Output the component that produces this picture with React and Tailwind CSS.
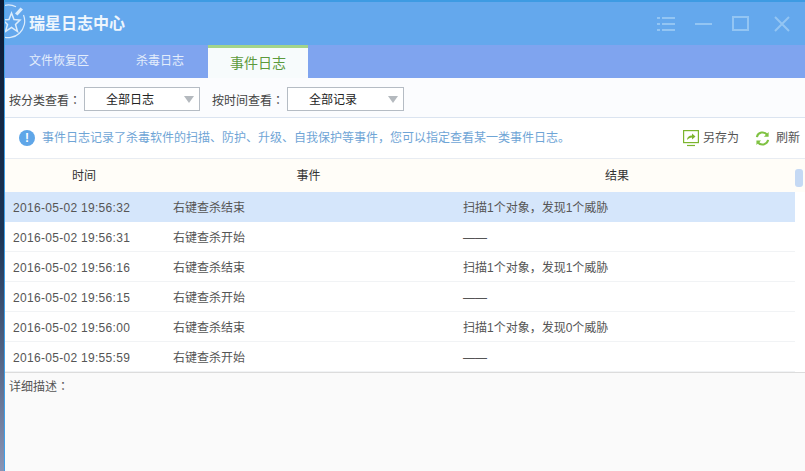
import React from 'react';

const rows = [
  ['2016-05-02 19:56:32', '右键查杀结束', '扫描1个对象，发现1个威胁', true],
  ['2016-05-02 19:56:31', '右键查杀开始', '——'],
  ['2016-05-02 19:56:16', '右键查杀结束', '扫描1个对象，发现1个威胁'],
  ['2016-05-02 19:56:15', '右键查杀开始', '——'],
  ['2016-05-02 19:56:00', '右键查杀结束', '扫描1个对象，发现0个威胁'],
  ['2016-05-02 19:55:59', '右键查杀开始', '——'],
];

function Logo() {
  return (
    <svg width="22" height="43" viewBox="0 0 22 43" fill="none" stroke="#dcecfb" strokeWidth="1.2" className="shrink-0">
      <path d="M-4 4.800 A16.500 16.500 0 0 1 11 4.800" />
      <path d="M18.500 13 A16.500 16.500 0 0 1 -4 34" />
      <path d="M6.500 11 L9 17.500 L15 18 L10.500 22.500 L12.500 29.500 L6.500 25.500 L0.500 29.500 L2.500 22.500 L-2 18 L4 17.500 Z" strokeWidth="1.5" />
      <path d="M10 11.500 L15.500 5.500 L18 7.500 L12.500 13.500 Z" fill="#dcecfb" stroke="none" />
    </svg>
  );
}

function WindowButtons() {
  return (
    <div className="flex items-center ml-auto">
      <svg width="18" height="16" viewBox="0 0 18 16" stroke="#93c5f3" strokeWidth="2" className="mr-[20px]">
        <path d="M0 2h3M5 2h13M0 8h3M5 8h13M0 14h3M5 14h13" />
      </svg>
      <svg width="17" height="17" viewBox="0 0 17 17" stroke="#93c5f3" strokeWidth="2" className="mr-[20px]">
        <path d="M0 9h17" />
      </svg>
      <svg width="17" height="15" viewBox="0 0 17 15" fill="none" stroke="#93c5f3" strokeWidth="2" className="mr-[25px]">
        <rect x="1" y="1" width="15" height="13" />
      </svg>
      <svg width="16" height="16" viewBox="0 0 16 16" stroke="#93c5f3" strokeWidth="2" className="mr-[15px]">
        <path d="M1 1l14 14M15 1L1 15" />
      </svg>
    </div>
  );
}

function Select({ label, width }) {
  return (
    <div className={`${width} h-[24px] bg-white border border-[#b5bcc4] flex items-center relative`}>
      <span className="pl-[21px] pt-[1px] text-[12px] text-[#222]">{label}</span>
      <span className="absolute right-[5px] top-[8px] w-0 h-0 border-l-[5px] border-r-[5px] border-t-[7px] border-l-transparent border-r-transparent border-t-[#b4b9be]" />
    </div>
  );
}

// the full-width colon sits centred in the cell in the reference, as in the TC face
function Colon() {
  return <span className="[font-family:'Noto_Sans_CJK_TC',sans-serif]">：</span>;
}

export default function App() {
  return (
    <div className="w-[805px] h-[471px] overflow-hidden flex bg-[#1a2a44] text-[12px] [font-family:'Liberation_Sans','Noto_Sans_CJK_SC',sans-serif]">
      {/* desktop showing behind the window */}
      <div className="w-[4px] shrink-0 bg-gradient-to-b from-[#0c1a33] via-[#1c3556] to-[#8a94b4]" />
      <div className="w-[801px] flex flex-col border-l border-[#3f9fe6] bg-white">
        <div className="h-[45px] shrink-0 bg-[#64a8ed] border-t-2 border-[#3d9be3] flex items-center">
          <Logo />
          <span className="ml-[2px] text-[16px] font-bold text-[#eef6fd]">瑞星日志中心</span>
          <WindowButtons />
        </div>

        <div className="h-[33px] shrink-0 bg-[#7fa4ef] flex">
          <div className="w-[107px] flex items-center justify-center text-[#e3edfb] pl-[1px] pb-[2px]">文件恢复区</div>
          <div className="w-[96px] flex items-center justify-center text-[#e3edfb] pb-[2px]">杀毒日志</div>
          <div className="w-[100px] bg-[#f7fbfc] border-t-[3px] border-[#a3d48a] flex items-center justify-center text-[14px] text-[#5c9a3c] pt-[1px]">事件日志</div>
        </div>

        <div className="h-[40px] shrink-0 bg-[#fbfcfe] border-b border-[#dbe4f0] flex items-center pl-[4px] pt-[3px] text-[#444]">
          <span className="w-[75px] pt-[2px]">按分类查看<Colon /></span>
          <Select label="全部日志" width="w-[116px]" />
          <span className="ml-[12px] w-[75px] pt-[2px]">按时间查看<Colon /></span>
          <Select label="全部记录" width="w-[117px]" />
        </div>

        <div className="h-[41px] shrink-0 bg-white border-b border-[#e8ecf2] flex items-center pl-[14px] pr-[5px]">
          <span className="w-[16px] h-[16px] rounded-full bg-[#5fa6e8] text-white font-bold flex items-center justify-center text-[12px]">!</span>
          <span className="ml-[7px] text-[#6fa5d6]">事件日志记录了杀毒软件的扫描、防护、升级、自我保护等事件，您可以指定查看某一类事件日志。</span>
          <svg width="16" height="17" viewBox="0 0 16 17" fill="none" stroke="#7cb52e" strokeWidth="1.2" className="ml-auto">
            <rect x="0.600" y="0.600" width="14.800" height="12" />
            <path d="M4 15.500h8" />
            <path d="M4 10c0-3 2-4.500 5-4.500V3.500l3.500 3-3.500 3V7.500C7 7.500 5.500 8.500 4 10z" fill="#7cb52e" stroke="none" />
          </svg>
          <span className="ml-[4px] text-[#555]">另存为</span>
          <svg width="15" height="15" viewBox="0 0 16 16" fill="none" stroke="#7fc242" strokeWidth="2.200" className="ml-[16px]">
            <path d="M2 6.500A6.200 6.200 0 0 1 13 4" />
            <path d="M14 9.500A6.200 6.200 0 0 1 3 12" />
            <path d="M14.500 1v5h-5z" fill="#7fc242" stroke="none" />
            <path d="M1.500 15v-5h5z" fill="#7fc242" stroke="none" />
          </svg>
          <span className="ml-[6px] text-[#555]">刷新</span>
        </div>

        <div className="h-[33px] shrink-0 bg-[#fffdf8] flex items-center relative text-[#333]">
          <span className="w-[790px] flex">
            <span className="w-[158px] text-center">时间</span>
            <span className="w-[290px] pl-[1px] text-center">事件</span>
            <span className="w-[328px] text-center">结果</span>
          </span>
          <span className="absolute left-[790px] top-[10px] w-[8px] h-[18px] rounded-[3px] bg-[#c5d9f4]" />
        </div>

        <div className="shrink-0">
          {rows.map((row, i) => (
            <div
              key={i}
              className={`h-[30px] w-[790px] flex items-center border-b pt-[2px] text-[#555] ${row[3] ? 'bg-[#d5e6fb] border-[#d5e6fb]' : 'bg-white border-[#f1f3f5]'}`}
            >
              <span className="w-[168px] pl-[8px] tracking-[0.3px]">{row[0]}</span>
              <span className="w-[290px]">{row[1]}</span>
              <span>{row[2]}</span>
            </div>
          ))}
        </div>

        <div className="flex-1 bg-[#fafafa] border-t border-[#dcdcdc] pl-[4px] pt-[4px] text-[#555]">详细描述<Colon /></div>
      </div>
    </div>
  );
}
